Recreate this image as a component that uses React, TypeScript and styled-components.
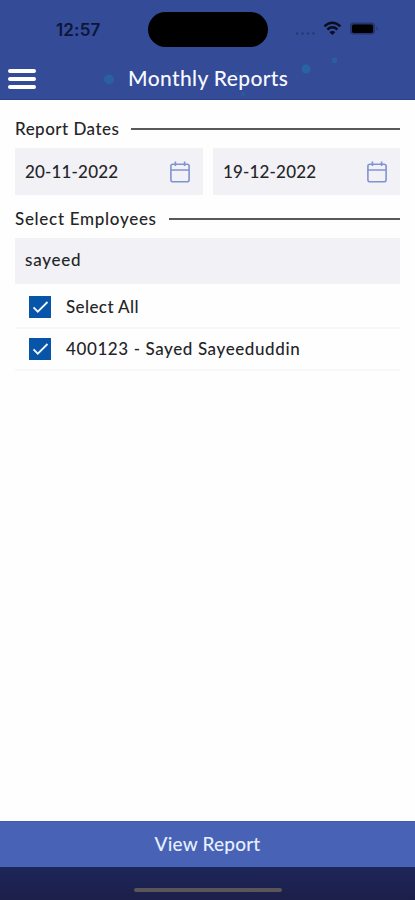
import React from "react";
import styled, { createGlobalStyle } from "styled-components";

const GlobalStyle = createGlobalStyle`
  * { box-sizing: border-box; }
  body { margin: 0; background: #fff; }
`;

const Screen = styled.div`
  width: 415px;
  height: 900px;
  display: flex;
  flex-direction: column;
  overflow: hidden;
  background: #fefefe;
  color: #252527;
  font-family: Lato, "Open Sans", sans-serif;
  font-weight: 500;
`;

const Header = styled.header`
  position: relative;
  height: 100px;
  flex: none;
  background: #344b98;
  border-bottom: 1px solid #2b3f91;
`;

const Sparkles = styled.svg`
  position: absolute;
  inset: 0;
`;

const StatusBar = styled.div`
  position: relative;
  height: 58px;
  display: grid;
  grid-template-columns: 148px 120px 147px;
  align-items: center;
`;

const Clock = styled.time`
  padding: 2px 0 0 56px;
  font: 600 17px/20px Inter, sans-serif;
  letter-spacing: 0.15px;
  color: #0d1538;
`;

const Island = styled.div`
  height: 35px;
  margin-top: 1px;
  border-radius: 18px;
  background: #000;
`;

const TitleBar = styled.div`
  position: relative;
  height: 42px;
  display: flex;
  align-items: center;
`;

const MenuButton = styled.button`
  width: 28px;
  height: 22px;
  margin-left: 8px;
  padding: 0;
  border: 0;
  background: none;
  display: flex;
  flex-direction: column;
  justify-content: center;
  gap: 4px;
`;

const MenuLine = styled.span`
  width: 28px;
  height: 4px;
  border-radius: 2px;
  background: #fff;
`;

const Label = styled.span<{ $size?: number; $track?: number }>`
  font-size: ${(p) => p.$size ?? 17}px;
  letter-spacing: ${(p) => p.$track ?? 0}px;
  line-height: 22px;
  white-space: nowrap;
`;

const Title = styled.h1`
  margin: 0 0 2px 92px;
  font-size: 21px;
  font-weight: 500;
  line-height: 26px;
  letter-spacing: 0.37px;
  white-space: nowrap;
  color: #f7f9ff;
`;

const Content = styled.main`
  flex: 1;
  padding: 18px 15px 0;
`;

const SectionHeading = styled.div`
  height: 22px;
  display: flex;
  align-items: center;
  gap: 12px;
`;

const Rule = styled.span`
  flex: 1;
  height: 2px;
  background: #58585a;
`;

const DateFields = styled.div`
  margin: 8px 0 13px;
  display: grid;
  grid-template-columns: 188px 187px;
  gap: 10px;
`;

const Field = styled.div`
  height: 47px;
  padding: 0 13px 0 10px;
  display: flex;
  align-items: center;
  justify-content: space-between;
  background: #f1f1f6;
`;

const SearchField = styled(Field)`
  height: 46px;
  margin-top: 8px;
  padding-bottom: 3px;
`;

const EmployeeRow = styled.div<{ $first?: boolean }>`
  height: ${(p) => (p.$first ? 45 : 42)}px;
  padding: ${(p) => (p.$first ? 3 : 0)}px 0 0 14px;
  display: flex;
  align-items: center;
  gap: 15px;
  border-bottom: 2px solid #f7f7f8;
`;

const Checkbox = styled.span`
  width: 22px;
  height: 22px;
  flex: none;
  display: flex;
  background: #0754a9;
`;

const ViewButton = styled.button`
  height: 46px;
  flex: none;
  padding: 0 0 1px;
  border: 0;
  border-top: 1px solid #405cad;
  background: #4863b5;
  color: #e6efff;
  font: inherit;
`;

const HomeArea = styled.footer`
  height: 33px;
  flex: none;
  padding-top: 21px;
  background: linear-gradient(#1d2659, #1c1f49);
`;

const HomeIndicator = styled.div`
  width: 148px;
  height: 4px;
  margin-left: 134px;
  border-radius: 2px;
  background: #5b5559;
`;

const StatusIcons = () => (
  <svg width="147" height="34" viewBox="268 12 147 34">
    <g fill="#263773">
      <circle cx="297" cy="33.5" r="1.2" />
      <circle cx="302.5" cy="33.5" r="1.2" />
      <circle cx="308" cy="33.5" r="1.2" />
      <circle cx="313.5" cy="33.5" r="1.2" />
    </g>
    <g fill="none" stroke="#080d20" strokeWidth="2.4">
      <path d="M324.4 26.3Q332.4 19.4 340.4 26.3" />
      <path d="M327.3 29.5Q332.4 25.2 337.5 29.5" />
    </g>
    <path d="M329.4 32Q332.4 29.8 335.4 32L332.4 35Z" fill="#080d20" />
    <rect x="350" y="22.5" width="25" height="12" rx="3.5" fill="#25356f" />
    <rect x="352" y="24.5" width="21" height="8.5" rx="1.8" fill="#000" />
    <path d="M376.5 26.5Q379 28.5 376.5 30.5Z" fill="#25356f" />
  </svg>
);

const CalendarIcon = () => (
  <svg width="20" height="22" viewBox="0 0 20 22" fill="none" stroke="#8192d2" strokeWidth="1.6">
    <rect x="0.9" y="3.2" width="18.2" height="17.6" rx="2" />
    <path d="M1 9H19M5.4 0.5V5M14.6 0.5V5" />
  </svg>
);

const Check = () => (
  <Checkbox role="checkbox" aria-checked="true">
    <svg width="22" height="22" viewBox="0 0 22 22" fill="none" stroke="#f2f7ff" strokeWidth="1.8">
      <path d="M4.5 11.4L8.8 15.7L18.5 6" />
    </svg>
  </Checkbox>
);

export default function App() {
  return (
    <Screen>
      <GlobalStyle />
      <Header>
        <Sparkles width="415" height="99" fill="#246ba8">
          <circle cx="109" cy="79.5" r="5" opacity="0.65" />
          <circle cx="306" cy="69" r="4.5" opacity="0.75" />
          <circle cx="334.5" cy="60.5" r="2.8" opacity="0.6" />
          <circle cx="243" cy="94" r="2.2" opacity="0.45" />
          <circle cx="237" cy="74" r="2" opacity="0.5" />
          <circle cx="382" cy="73" r="1.5" opacity="0.2" />
        </Sparkles>
        <StatusBar>
          <Clock>12:57</Clock>
          <Island />
          <StatusIcons />
        </StatusBar>
        <TitleBar>
          <MenuButton aria-label="Menu">
            <MenuLine />
            <MenuLine />
            <MenuLine />
          </MenuButton>
          <Title>Monthly Reports</Title>
        </TitleBar>
      </Header>
      <Content>
        <SectionHeading>
          <Label $track={0.48}>Report Dates</Label>
          <Rule />
        </SectionHeading>
        <DateFields>
          <Field>
            <Label $track={0.17}>20-11-2022</Label>
            <CalendarIcon />
          </Field>
          <Field>
            <Label $track={0.17}>19-12-2022</Label>
            <CalendarIcon />
          </Field>
        </DateFields>
        <SectionHeading>
          <Label $track={0.7}>Select Employees</Label>
          <Rule />
        </SectionHeading>
        <SearchField>
          <Label $track={0.75}>sayeed</Label>
        </SearchField>
        <EmployeeRow $first>
          <Check />
          <Label $track={0.4}>Select All</Label>
        </EmployeeRow>
        <EmployeeRow>
          <Check />
          <Label $track={0.6}>400123 - Sayed Sayeeduddin</Label>
        </EmployeeRow>
      </Content>
      <ViewButton>
        <Label $size={19} $track={0.2}>View Report</Label>
      </ViewButton>
      <HomeArea>
        <HomeIndicator />
      </HomeArea>
    </Screen>
  );
}
